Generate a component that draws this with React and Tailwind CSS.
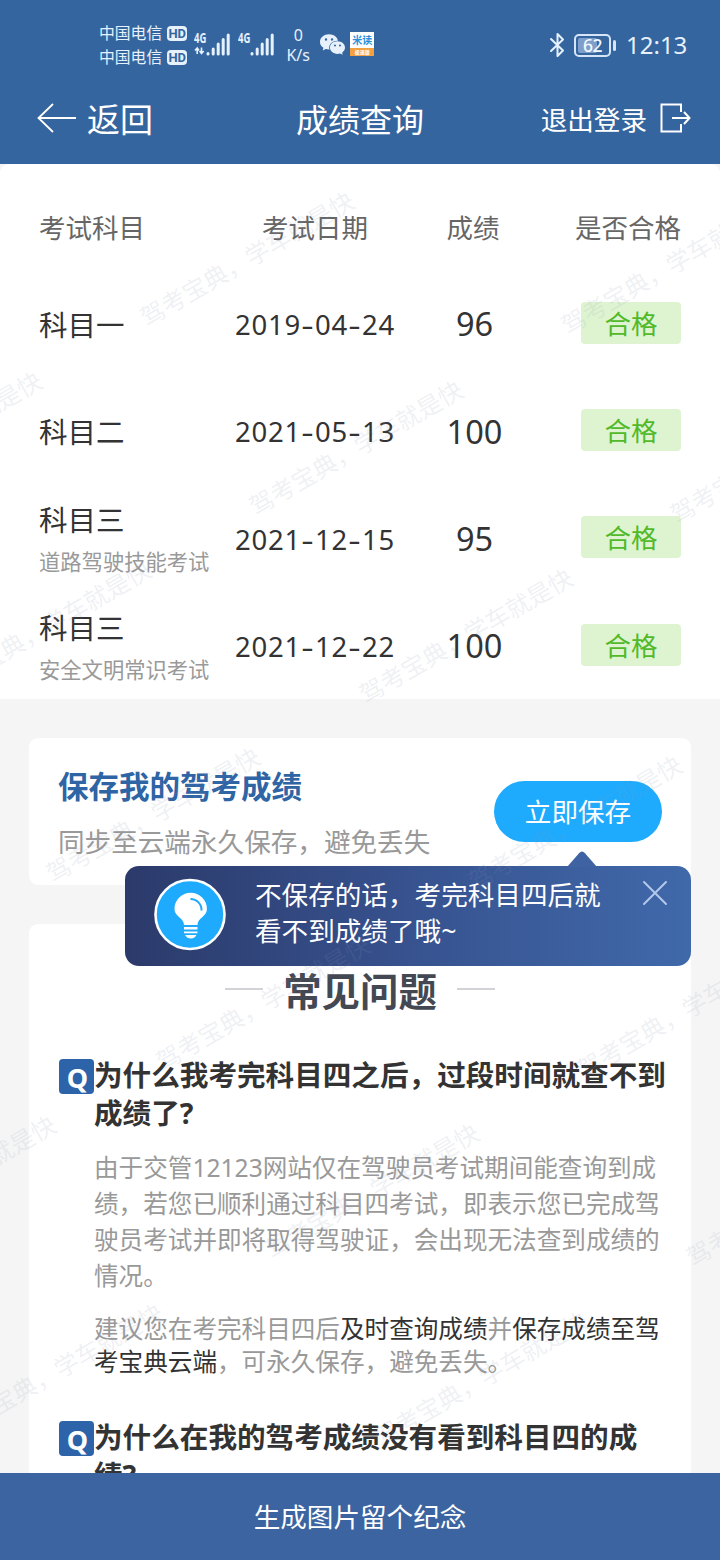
import { IoLogoWechat } from 'react-icons/io5'

const RESULTS = [
  { subject: '科目一', date: '2019-04-24', score: 96 },
  { subject: '科目二', date: '2021-05-13', score: 100 },
  { subject: '科目三', note: '道路驾驶技能考试', date: '2021-12-15', score: 95 },
  { subject: '科目三', note: '安全文明常识考试', date: '2021-12-22', score: 100 },
]

// centre points of the repeated diagonal watermark
const WATERMARKS = [
  [247, 259],
  [668, 267],
  [-65, 439],
  [356, 448],
  [777, 456],
  [44, 628],
  [466, 636],
  [153, 815],
  [575, 823],
  [263, 1003],
  [684, 1011],
  [-51, 1183],
  [372, 1191],
  [793, 1199],
  [56, 1371],
  [481, 1379],
]

function Signal({ arrows }) {
  return (
    <div className="relative h-[25px] w-[36px]">
      <span className="absolute left-0 top-0 origin-left scale-x-[0.68] text-[14px] font-bold leading-[12px]">
        4G
      </span>
      <svg className="absolute inset-0" width="36" height="25" viewBox="0 0 36 25" fill="none">
        <g stroke="currentColor" strokeWidth="3" strokeLinecap="round">
          <path d="M14 21.6V22M19.2 17V22M24.2 12V22M29.2 7.5V22M34.2 3V22" />
        </g>
        {arrows && (
          <path
            d="M3.2 22V16M1 18.500l2.200-2.500L5 18.500M7.500 15.500V21.500M5.600 19l1.900 2.500L9.700 19"
            stroke="currentColor"
            strokeWidth="1.6"
          />
        )}
      </svg>
    </div>
  )
}

function Carrier() {
  return (
    <div className="flex items-center gap-[5px]">
      <span className="text-[15.8px] leading-[24px]">中国电信</span>
      <span className="flex h-[15px] w-[20px] items-center justify-center rounded-[4px] bg-[#e6f1fc] font-['Roboto',sans-serif] text-[13px] font-bold leading-none text-[#35659f]">
        HD
      </span>
    </div>
  )
}

function StatusBar() {
  return (
    <div className="flex h-[82px] items-start justify-between pl-[99px] pr-[34px] text-[#e6f1fc]">
      <div className="flex pt-[21px]">
        <div>
          <Carrier />
          <Carrier />
        </div>
        <div className="ml-[7px] flex gap-[8px] pt-[11px]">
          <Signal arrows />
          <Signal />
        </div>
        <div className="ml-[11px] w-[26px] pt-[4px] text-center text-[16px] leading-[20px]">
          <div>0</div>
          <div className="whitespace-nowrap">K/s</div>
        </div>
        <IoLogoWechat className="ml-[9px] mt-[11px]" size={25} />
        <div className="ml-[5px] mt-[11px] flex h-[24px] w-[24px] flex-col overflow-hidden bg-white text-center font-bold">
          <div className="h-[16px] whitespace-nowrap text-[10px] leading-[16px] text-[#2b8fdc]">
            米读
          </div>
          <div className="h-[8px] bg-[#f4a040] text-[5px] leading-[8px] text-white">极速版</div>
        </div>
      </div>

      <div className="flex items-center pt-[31px]">
        <svg width="17" height="26" viewBox="0 0 17 26" fill="none">
          <path
            d="M2 7l12 11.500L8.500 24V2L14 7.500 2 19"
            stroke="currentColor"
            strokeWidth="2"
            strokeLinejoin="round"
            strokeLinecap="round"
          />
        </svg>
        <div className="ml-[8px] flex h-[23px] w-[37px] items-center rounded-[5px] border-2 border-[#d5e5f7] p-[2px]">
          <div className="h-full w-[19px] rounded-[2px] bg-[#7f9fca]">
            <span className="-mt-px block w-[29px] text-center text-[17.5px] font-medium leading-[17px] tracking-[-0.5px] text-[#f2f8ff]">
              62
            </span>
          </div>
        </div>
        <div className="ml-[2px] h-[11px] w-[3px] rounded-sm bg-[#d5e5f7]" />
        <span className="ml-[10px] w-[60px] whitespace-nowrap text-[24px] leading-[28px]">
          12:13
        </span>
      </div>
    </div>
  )
}

function NavBar() {
  return (
    <div className="grid h-[82px] grid-cols-[1fr_auto_1fr] items-center px-[29px] pb-[6px] text-white">
      <div className="flex items-center gap-[10px] pl-[8px]">
        <svg width="40" height="30" viewBox="0 0 40 30" fill="none" className="-mt-[4px]">
          <path d="M16 1L1.500 15 16 29M1.500 15H39" stroke="currentColor" strokeWidth="1.8" />
        </svg>
        <span className="text-[33px] leading-[40px]">返回</span>
      </div>
      <h1 className="text-[32px] leading-[40px]">成绩查询</h1>
      <div className="flex items-center justify-end gap-[13px]">
        <span className="text-[26.6px] leading-[36px]">退出登录</span>
        <svg width="31" height="30" viewBox="0 0 31 30" fill="none" className="-mt-[4px]">
          <path
            d="M21 9V1.500H1.500v27H21V21M12 15h17M24 9l5.500 6-5.500 6"
            stroke="currentColor"
            strokeWidth="2"
          />
        </svg>
      </div>
    </div>
  )
}

function ExamDate({ value }) {
  const [year, month, day] = value.split('-')
  const dash = <span className="inline-block w-[14px] scale-x-140 text-center">-</span>

  return (
    <span className="whitespace-nowrap text-center text-[27.5px] tracking-[0.8px]">
      {year}
      {dash}
      {month}
      {dash}
      {day}
    </span>
  )
}

function ResultTable() {
  return (
    <section className="h-[535px] overflow-hidden rounded-t-[9px] bg-white px-[39px]">
      <div className="grid h-[107px] grid-cols-[195px_162px_154px_131px] items-center pt-[21px] text-[26.5px] leading-[36px] text-[#666]">
        <span>考试科目</span>
        <span className="text-center">考试日期</span>
        <span className="text-center">成绩</span>
        <span className="text-right">是否合格</span>
      </div>
      {RESULTS.map((row) => (
        <div
          key={row.date}
          className="grid h-[107.4px] grid-cols-[195px_162px_154px_131px] items-center text-[#333]"
        >
          <div>
            <div className="text-[28.5px] leading-[42px]">{row.subject}</div>
            {row.note && (
              <div className="pt-[4px] text-[21.3px] leading-[34px] text-[#999]">{row.note}</div>
            )}
          </div>
          <ExamDate value={row.date} />
          <span className="pl-[3px] text-center text-[32.5px]">{row.score}</span>
          <span className="-mt-[4px] flex h-[42px] w-[100px] justify-center justify-self-end rounded-[4px] bg-[#def4d1] text-[26.5px] leading-[44px] text-[#52b929]">
            合格
          </span>
        </div>
      ))}
    </section>
  )
}

function SaveTip() {
  return (
    <div className="absolute right-0 top-[128px] flex h-[100px] w-[566px] rounded-[14px] bg-linear-to-r from-[#2b3a6a] via-[#37528f] to-[#4069aa] text-white">
      <svg
        className="absolute -top-[15px] left-[442px]"
        width="30"
        height="16"
        viewBox="0 0 30 16"
        fill="#3e62a2"
      >
        <path d="M0 16L12 2.200Q15-1 18 2.200L30 16Z" />
      </svg>
      <svg className="ml-[29px] mt-[12px]" width="72" height="73" viewBox="0 0 72 72" fill="none">
        <circle cx="36" cy="36" r="34.5" fill="#1eaafd" stroke="white" strokeWidth="2.6" />
        <path
          d="M30 46.500C30 39 20.500 38.500 20.500 30.500a16.200 16.200 0 0 1 32.400 0C52.900 38.500 43.500 39 43.500 46.500Z"
          fill="white"
        />
        <path d="M36.500 20.500a11 11 0 0 1 11 11.500" stroke="#1eaafd" strokeWidth="2" />
        <path
          d="M30 48.500h13.500v2.500H30zM30 53h13.500v1.800H30zM31 56.500h11.500q-2 3.500-5.700 3.500T31 56.500z"
          fill="white"
        />
      </svg>
      <p className="ml-[29px] mt-[11px] w-[355px] text-[26.6px] leading-[36px]">
        不保存的话，考完科目四后就看不到成绩了哦~
      </p>
      <svg className="ml-[32px] mt-[14px] text-[#b4c8ec]" width="26" height="26" viewBox="0 0 26 26">
        <path
          d="M2 2l22 22M24 2L2 24"
          stroke="currentColor"
          strokeWidth="2"
          strokeLinecap="round"
        />
      </svg>
    </div>
  )
}

function SaveCard() {
  return (
    <section className="relative z-10 flex h-[147px] justify-between rounded-[9px] bg-white px-[29px]">
      <div>
        <h2 className="mt-[27px] text-[30.5px] font-bold leading-[42px] text-[#2f64a5]">
          保存我的驾考成绩
        </h2>
        <p className="mt-[17px] text-[26.6px] leading-[36px] text-[#999]">
          同步至云端永久保存，避免丢失
        </p>
      </div>
      <button
        type="button"
        className="mt-[43px] h-[61px] w-[168px] rounded-full bg-[#1eabfe] pt-[3px] text-[26.6px] text-white"
      >
        立即保存
      </button>
      <SaveTip />
    </section>
  )
}

function Question({ children }) {
  return (
    <div className="flex">
      <span className="mt-[3px] h-[35px] w-[35px] shrink-0 rounded-[4px] bg-[#2d63a8] pl-[2px] text-center text-[27px] font-bold leading-[38px] text-white">
        Q
      </span>
      <h3 className="w-[575px] text-[28.6px] font-bold leading-[38px] text-[#333]">{children}</h3>
    </div>
  )
}

function Faq() {
  return (
    <section className="mt-[39px] h-[700px] rounded-[9px] bg-white pl-[30px] pt-[39px]">
      <div className="-ml-[30px] flex items-center justify-center gap-[20px]">
        <span className="mb-[5px] h-[2px] w-[38px] bg-[#d2d3d6]" />
        <h2 className="text-[38.4px] font-bold leading-[56px] text-[#444852]">常见问题</h2>
        <span className="mb-[5px] h-[2px] w-[38px] bg-[#d2d3d6]" />
      </div>
      <div className="mt-[37px]">
        <Question>为什么我考完科目四之后，过段时间就查不到成绩了?</Question>
        <div className="ml-[35px] w-[570px] text-[24.6px] text-[#999]">
          <p className="mt-[18px] leading-[36px]">
            由于交管12123网站仅在驾驶员考试期间能查询到成绩，若您已顺利通过科目四考试，即表示您已完成驾驶员考试并即将取得驾驶证，会出现无法查到成绩的情况。
          </p>
          <p className="mt-[18px] leading-[33px]">
            建议您在考完科目四后<span className="text-[#333]">及时查询成绩</span>并
            <span className="text-[#333]">保存成绩至驾考宝典云端</span>，可永久保存，避免丢失。
          </p>
        </div>
      </div>
      <div className="mt-[40px]">
        <Question>为什么在我的驾考成绩没有看到科目四的成绩?</Question>
      </div>
    </section>
  )
}

function Watermarks() {
  return (
    <div className="pointer-events-none absolute inset-0 z-20 overflow-hidden">
      {WATERMARKS.map(([x, y]) => (
        <span
          key={`${x}-${y}`}
          className="absolute -translate-x-1/2 -translate-y-1/2 -rotate-30 whitespace-nowrap text-[24.2px] leading-none text-[#8c96af]/15"
          style={{ left: x, top: y }}
        >
          驾考宝典，学车就是快
        </span>
      ))}
    </div>
  )
}

export default function App() {
  return (
    <div
      lang="zh-CN"
      className="relative flex h-[1560px] w-[720px] flex-col overflow-hidden bg-[#f5f5f5] font-['Noto_Sans','Noto_Sans_CJK_SC',sans-serif]"
    >
      <header className="shrink-0 bg-[#35659f]">
        <StatusBar />
        <NavBar />
      </header>
      <main className="min-h-0 flex-1 overflow-hidden">
        <ResultTable />
        <div className="mx-[29px] mt-[39px]">
          <SaveCard />
          <Faq />
        </div>
      </main>
      <Watermarks />
      <footer className="relative z-30 flex h-[87px] shrink-0 items-center justify-center bg-[#3c64a1] text-[26.6px] text-white">
        <span className="pt-[3px]">生成图片留个纪念</span>
      </footer>
    </div>
  )
}
